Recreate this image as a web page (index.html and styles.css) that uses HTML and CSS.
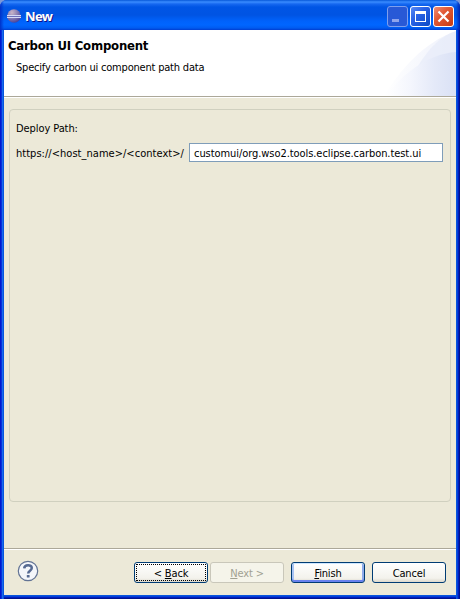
FILE: index.html
```html
<!DOCTYPE html>
<html lang="en">
<head>
<meta charset="utf-8">
<title>New</title>
<link rel="stylesheet" href="styles.css">
</head>
<body>
<div class="window">
  <div class="titlebar">
    <svg class="app-icon" width="16" height="16" viewBox="0 0 16 16">
      <defs><radialGradient id="orb" cx=".35" cy=".25" r=".8"><stop offset="0" stop-color="#c9b5c8"/><stop offset=".5" stop-color="#8a80b4"/><stop offset="1" stop-color="#453d98"/></radialGradient></defs>
      <circle cx="8" cy="8" r="6.8" fill="url(#orb)"/>
      <path d="M1 7.5h14M1 9.5h14" stroke="#d5daf6"/><path d="M1 8.5h14" stroke="#6f70bb"/>
    </svg>
    <span class="title">New</span>
    <div class="controls">
      <svg class="min" width="21" height="21" viewBox="0 0 21 21">
        <defs><linearGradient id="blue" x1="0" y1="0" x2="1" y2="1"><stop offset="0" stop-color="#5c8cf4"/><stop offset=".4" stop-color="#2a62e6"/><stop offset="1" stop-color="#0b48c4"/></linearGradient></defs>
        <rect x=".5" y=".5" width="20" height="20" rx="2.5" fill="#2859d6" stroke="#7f9fed"/><path d="M5 14.5h7" stroke="#8ea4ec" stroke-width="3"/>
      </svg>
      <svg width="21" height="21" viewBox="0 0 21 21">
        <rect x=".5" y=".5" width="20" height="20" rx="2.5" fill="url(#blue)" stroke="#fff"/><rect x="5.5" y="5.5" width="10" height="10" fill="none" stroke="#fff"/><path d="M5 6.5h11" stroke="#fff" stroke-width="3"/>
      </svg>
      <svg width="21" height="21" viewBox="0 0 21 21">
        <defs><linearGradient id="red" x1="0" y1="0" x2="1" y2="1"><stop offset="0" stop-color="#f0927a"/><stop offset=".4" stop-color="#e25a36"/><stop offset="1" stop-color="#c43a12"/></linearGradient></defs>
        <rect x=".5" y=".5" width="20" height="20" rx="2.5" fill="url(#red)" stroke="#fff"/><path d="M5.5 5.5l10 10M15.5 5.5l-10 10" stroke="#fff" stroke-width="2.2"/>
      </svg>
    </div>
  </div>
  <div class="client">
    <div class="header">
      <div class="heading">
        <h1>Carbon UI Component</h1>
        <p>Specify carbon ui component path data</p>
      </div>
      <svg class="banner" width="75" height="66" viewBox="0 0 75 66">
        <defs>
          <linearGradient id="sweep"><stop offset="0" stop-color="#fff"/><stop offset="1" stop-color="#eef1fb"/></linearGradient>
          <linearGradient id="wave"><stop offset="0" stop-color="#fff"/><stop offset=".35" stop-color="#f4f6fd"/><stop offset=".7" stop-color="#e4e9f8"/><stop offset="1" stop-color="#dae1f5"/></linearGradient>
        </defs>
        <path d="M3 66C19 40 43 12 75 1V66Z" fill="url(#sweep)"/>
        <path d="M37 36C48 18 60 6 75 1V66H37Z" fill="#e4eaf9" opacity=".6"/>
        <path d="M5 66C20 46 45 24 75 22V66Z" fill="url(#wave)"/>
      </svg>
    </div>
    <div class="body">
      <div class="group">
        <div class="label">Deploy Path:</div>
        <div class="field-row"><span class="url">https://&lt;host_name&gt;/&lt;context&gt;/</span><div class="input"><span>customui/org.wso2.tools.eclipse.carbon.test.ui</span></div></div>
      </div>
    </div>
    <div class="footer">
      <svg class="help" width="22" height="22" viewBox="0 0 22 22">
        <circle cx="11" cy="11" r="9.7" fill="#f4f6fa" stroke="#627394" stroke-width="1.2"/>
        <path d="M7.2 8.4C7.4 4.2 14.8 4.2 14.8 8C14.8 10.6 11.2 10.7 11.2 13.4" fill="none" stroke="#566a92" stroke-width="2.5"/><rect x="9.8" y="15" width="2.8" height="2.6" rx=".6" fill="#566a92"/>
      </svg>
      <div class="buttons">
        <div class="button focused"><span>&lt; <u>B</u>ack</span></div>
        <div class="button disabled"><span><u>N</u>ext &gt;</span></div>
        <div class="button default"><span><u>F</u>inish</span></div>
        <div class="button"><span>Cancel</span></div>
      </div>
    </div>
  </div>
</div>
</body>
</html>
```
FILE: styles.css
```css
* { box-sizing: border-box; }
body {
  margin: 0;
  background: #7b98d8;
  font: 11px/14px "DejaVu Sans Condensed", "DejaVu Sans", sans-serif;
  font-stretch: condensed;
  color: #000;
}
.window {
  width: 460px;
  height: 599px;
  display: flex;
  flex-direction: column;
  border-radius: 7px 7px 0 0;
  overflow: hidden;
  background: linear-gradient(90deg, #0019cf 0 1px, #0831d9 1px 2px, #166aee 2px 3px, #0855dd 3px 4px, transparent 4px 456px, #0855dd 456px 457px, #0441d8 457px 458px, #001dc0 458px 459px, #00138c 459px), #0046d8;
}
.titlebar {
  height: 30px;
  flex: none;
  display: flex;
  align-items: center;
  padding: 2px 6px 0 6px;
  background: linear-gradient(90deg, #0030c8 0, transparent 4px 456px, #0023b0), linear-gradient(#0758d9 0, #3a8cff 2px, #1668f0 4px, #0055e5 7px, #0054e3 15px, #0062fb 21px, #0066ff 25px, #005bf0 28px, #003dd0);
}
.app-icon { flex: none; }
.title {
  margin-left: 3px;
  color: #fff;
  font: bold 13px/16px "Noto Sans", sans-serif;
  letter-spacing: -.6px;
  text-shadow: 1px 1px #0f1089;
}
.controls { margin-left: auto; display: flex; gap: 2px; }
.controls svg { display: block; }
.client {
  flex: 1;
  margin: 0 4px 4px;
  display: flex;
  flex-direction: column;
  background: #ece9d8;
  box-shadow: 0 1px #0855dd, 0 2px #0441d8, 0 3px #001dc0, 0 4px #00138c;
}
.header {
  height: 68px;
  flex: none;
  display: flex;
  justify-content: space-between;
  background: #fff;
  border-bottom: 1px solid #fff;
  box-shadow: inset 0 -1px #aca899;
}
.heading { padding: 8px 0 0 4px; white-space: nowrap; }
h1 { margin: 0; font-size: 13px; line-height: 16px; letter-spacing: -.22px; }
p { margin: 7px 0 0 8px; letter-spacing: -.2px; }
.banner { display: block; }
.body { flex: 1; padding: 11px 5px 46px; display: flex; }
.group { flex: 1; border: 1px solid #d0d0bf; border-radius: 4px; padding: 12px 7px 0 6px; }
.label { height: 14px; letter-spacing: -.08px; }
.field-row { display: flex; align-items: center; margin-top: 7px; white-space: nowrap; }
.url { width: 173px; padding-top: 2px; letter-spacing: .03px; }
.input {
  flex: 1;
  height: 19px;
  border: 1px solid #7f9db9;
  background: #fff;
  padding: 3px 4px 0;
  line-height: 14px;
  letter-spacing: -.065px;
}
.footer {
  height: 47px;
  flex: none;
  display: flex;
  align-items: flex-start;
  justify-content: space-between;
  border-top: 1px solid #aca899;
  box-shadow: inset 0 1px #fff;
  padding: 11px 10px 0 13px;
}
.help { display: block; }
.buttons { display: flex; margin-top: 2px; }
.button {
  width: 74px;
  height: 21px;
  margin-left: 7px;
  border: 1px solid #003c74;
  border-radius: 3px;
  background: linear-gradient(#fff, #f3f2ec 80%, #dcd8cc);
  display: flex;
  align-items: center;
  justify-content: center;
  padding-top: 2px;
  white-space: pre;
  letter-spacing: -.15px;
}
.focused { position: relative; }
.focused::after { content: ""; position: absolute; inset: 1px; border: 1px dotted #000; }
.disabled { margin-left: 2px; color: #a1a192; border-color: #c9c7ba; background: #f5f4ea; }
.default { box-shadow: inset 0 1px #cee7ff, inset 0 -2px #6982ee, inset 2px 0 #a9c4f3, inset -2px 0 #8fabea; }
u { text-decoration: underline; text-underline-offset: 1px; text-decoration-thickness: 1px; text-decoration-skip-ink: none; }
```
